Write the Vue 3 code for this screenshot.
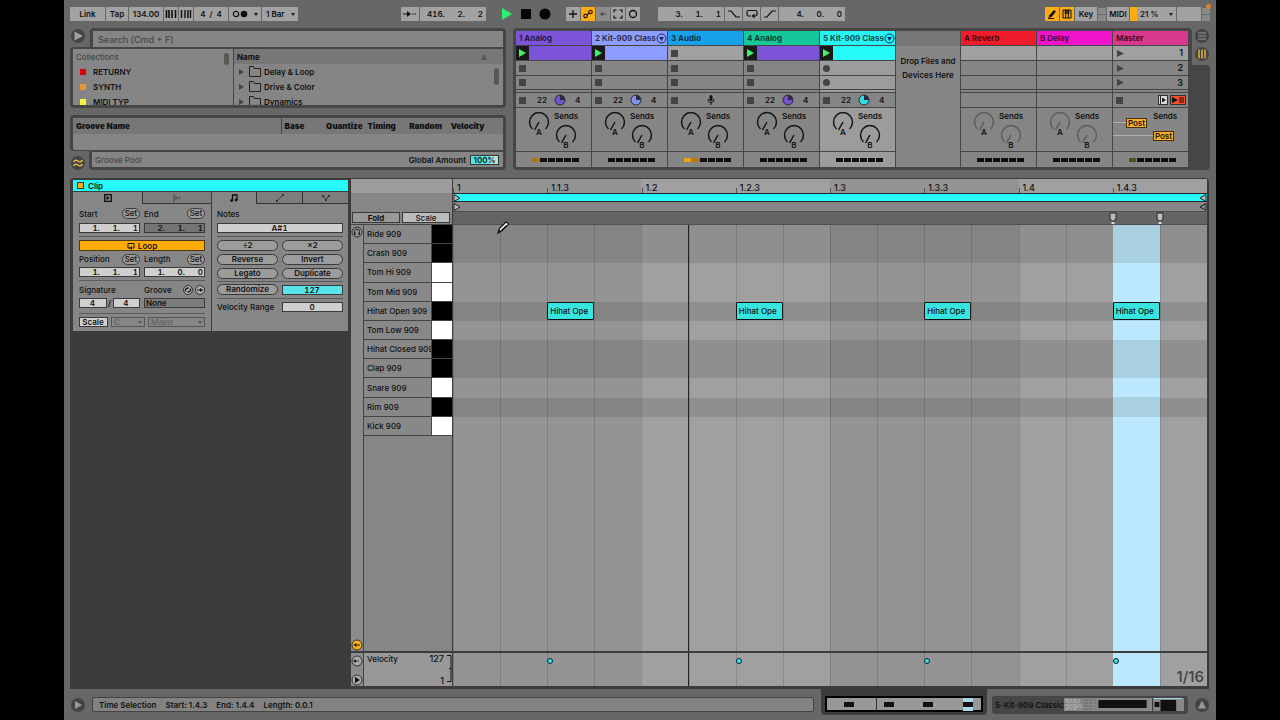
<script setup>
const tracks = [
  { name: '1 Analog', color: '#7c54d8', clip: '#7c54d8', pie: '#7254c8', meter: ['#a8781c'] },
  { name: '2 Kit-909 Class', color: '#8c9cff', clip: '#8c9cff', pie: '#8294ee', fold: true, meter: [] },
  { name: '3 Audio', color: '#18a0e8', audio: true, meter: ['#e8a414', '#b47c14'] },
  { name: '4 Analog', color: '#14c89c', clip: '#7c54d8', pie: '#7254c8', meter: [] },
  { name: '5 Kit-909 Class', color: '#26f4f4', clip: '#26fbfb', pie: '#30dce0', fold: true, selected: true, meter: [] }
]
const returns = [
  { name: 'A Reverb', color: '#f01c2c' },
  { name: 'B Delay', color: '#ee14cc' }
]
const collections = [
  { name: 'RETURNY', color: '#d8000c' },
  { name: 'SYNTH', color: '#e89434' },
  { name: 'MIDI TYP', color: '#f4f43c' }
]
const folders = ['Delay & Loop', 'Drive & Color', 'Dynamics']
const pads = [
  ['Ride 909', 1], ['Crash 909', 1], ['Tom Hi 909', 0], ['Tom Mid 909', 0], ['Hihat Open 909', 1], ['Tom Low 909', 0],
  ['Hihat Closed 909', 1], ['Clap 909', 1], ['Snare 909', 0], ['Rim 909', 1], ['Kick 909', 0]
]
const times = ['1', '1.1.3', '1.2', '1.2.3', '1.3', '1.3.3', '1.4', '1.4.3']
const notes = [12.5, 37.5, 62.5, 87.5]
const gap = '      '
const pos = (a, b, c) => a + '.' + gap + b + '.' + gap + c
</script>

<template>
  <main class="screen">
    <div class="window">
      <i class="indicator"></i>
      <header class="toolbar">
        <div class="group">
          <button class="tb w35">Link</button>
          <button class="tb w22">Tap</button>
          <input class="tb w34" value="134.00" aria-label="Tempo">
          <button class="tb w14" aria-label="Nudge down"><svg width="12" height="10"><path d="M1.500 1v8M4 1v8M7 1v8M10.500 1v8" stroke="#111" stroke-width="1.600" /></svg></button>
          <button class="tb w14" aria-label="Nudge up"><svg width="12" height="10"><path d="M1.500 1v8M5 1v8M8 1v8M10.500 1v8" stroke="#111" stroke-width="1.400" /></svg></button>
          <input class="tb w34" value="4  /  4" aria-label="Time signature">
          <button class="tb w32 metro" aria-label="Metronome"><svg width="26" height="10"><circle cx="4" cy="5" r="2.700" fill="none" stroke="#111" stroke-width="1.200" /><circle cx="12" cy="5" r="3.300" fill="#111" /><path d="M22 4h4l-2 3z" fill="#111" /></svg></button>
          <span class="pick w36"><select class="tb" aria-label="Quantization"><option>1 Bar</option></select></span>
        </div>
        <div class="group place">
          <button class="tb w18" aria-label="Follow"><svg width="14" height="8"><path d="M0 4h5M9 4h1.500M11.500 4h1.500" stroke="#111" stroke-width="1.200" /><path d="M4 1l4 3-4 3z" fill="#111" /></svg></button>
          <input class="tb right w66" :value="pos(416, 2, 2)" aria-label="Arrangement position">
        </div>
        <div class="group transport">
          <button aria-label="Play"><svg width="12" height="12"><path d="M1 0l10 6-10 6z" fill="#2ef070" /></svg></button>
          <button aria-label="Stop"><svg width="12" height="12"><path d="M1 1h10v10H1z" fill="#050505" /></svg></button>
          <button aria-label="Record"><svg width="12" height="12"><circle cx="6" cy="6" r="5.500" fill="#050505" /></svg></button>
        </div>
        <div class="group tools">
          <button class="tb w14" aria-label="Overdub"><svg width="10" height="10"><path d="M5 1v8M1 5h8" stroke="#111" stroke-width="1.300" /></svg></button>
          <button class="tb w14 on" aria-label="Automation arm"><svg width="10" height="10" fill="none" stroke="#111" stroke-width="1.100"><circle cx="2.500" cy="7" r="1.700" /><circle cx="7.500" cy="3" r="1.700" /><path d="M4 6l2-2" /></svg></button>
          <button class="tb w14 dimmed" aria-label="Re-enable automation"><svg width="10" height="10"><path d="M4 5h4" stroke="#555" stroke-width="1.500" /><path d="M5 2.500L1.500 5 5 7.500z" fill="#555" /></svg></button>
          <button class="tb w14" aria-label="Capture"><svg width="10" height="10"><path d="M1 3.500V1h2.500M6.500 1H9v2.500M9 6.500V9H6.500M3.500 9H1V6.500" fill="none" stroke="#111" stroke-width="1.200" /></svg></button>
          <button class="tb w14" aria-label="Session record"><svg width="10" height="10"><circle cx="5" cy="5" r="3.500" fill="none" stroke="#111" stroke-width="1.300" /></svg></button>
        </div>
        <div class="group loopset">
          <input class="tb right w66" :value="pos(3, 1, 1)" aria-label="Loop start">
          <button class="tb w17" aria-label="Punch in"><svg width="12" height="8"><path d="M0 1h3l5 6h4" fill="none" stroke="#111" stroke-width="1.200" /></svg></button>
          <button class="tb w17" aria-label="Loop"><svg width="12" height="10"><path d="M5 7H2.500Q1 7 1 5.500V3q0-1.500 1.500-1.500h7Q11 1.500 11 3v2.500Q11 7 9.500 7H8" fill="none" stroke="#111" stroke-width="1.200" /><path d="M8.500 4.500v5L5.500 7z" fill="#111" /></svg></button>
          <button class="tb w17" aria-label="Punch out"><svg width="12" height="8"><path d="M0 7h3l5-6h4" fill="none" stroke="#111" stroke-width="1.200" /></svg></button>
          <input class="tb right w66" :value="pos(4, 0, 0)" aria-label="Loop length">
        </div>
        <div class="group end">
          <button class="tb w14 on" aria-label="Draw mode"><svg width="10" height="10"><path d="M2 6.500L7 1l2 1.500L4.500 8 1.500 9z" fill="#111" /><path d="M1 9.500h6" stroke="#111" /></svg></button>
          <button class="tb w14 on" aria-label="Computer MIDI keyboard"><svg width="10" height="10"><path d="M1 1h8v8H1zM3.700 1v8M6.300 1v8" fill="none" stroke="#111" /><path d="M2.700 1h2v4h-2zM5.300 1h2v4h-2z" fill="#111" /></svg></button>
          <button class="tb w22">Key</button>
          <span class="leds"><i></i><i></i></span>
          <button class="tb w22">MIDI</button>
          <button class="tb cpu">21 %<i></i></button>
          <span class="tb w24"></span>
          <span class="leds"><i></i><i></i></span>
        </div>
      </header>

      <div class="upper">
        <section class="left">
          <div class="browser">
            <div class="tabrow">
              <button class="round" aria-label="Toggle browser"><svg width="14" height="14"><circle cx="7" cy="7" r="7" fill="#444" /><path d="M3.500 2.500L12 7l-8.500 4.500z" fill="#a0a0a0" /></svg></button>
              <div class="tab"><input class="search" type="text" placeholder="Search (Cmd + F)" aria-label="Search"></div>
            </div>
            <div class="frame files">
              <div class="collections">
                <p class="faint">Collections</p>
                <p v-for="c in collections" :key="c.name"><i class="swatch" :style="{ background: c.color }"></i>{{ c.name }}</p>
                <i class="thumb"></i>
              </div>
              <div class="folders">
                <h2>Name<svg width="6" height="6"><path d="M3 0l3 6H0z" fill="#555" /></svg></h2>
                <p v-for="f in folders" :key="f"><svg width="5" height="6"><path d="M0 0l5 3-5 3z" fill="#444" /></svg><svg width="12" height="11"><path d="M.5 10.500V.5h4l1 2h6v8z" fill="none" stroke="#222" /></svg>{{ f }}</p>
                <i class="thumb"></i>
              </div>
            </div>
          </div>
          <div class="grooves">
            <div class="frame gtable">
              <div class="ghead"><b>Groove Name</b><b>Base</b><b>Quantize</b><b>Timing</b><b>Random</b><b>Velocity</b></div>
            </div>
            <div class="tabrow">
              <button class="round low" aria-label="Groove pool"><svg width="14" height="14"><circle cx="7" cy="7" r="7" fill="#444" /><path d="M2.500 6q2-3 4.500-1t4.500-1M2.500 10q2-3 4.500-1t4.500-1" fill="none" stroke="#e4b43c" stroke-width="1.500" /></svg></button>
              <div class="tab pool"><span class="faint">Groove Pool</span><label>Global Amount <input value="100%"></label></div>
            </div>
          </div>
        </section>

        <section class="session">
          <div v-for="t in tracks" :key="t.name" class="track" :class="{ selected: t.selected }">
            <h3 :style="{ background: t.color }">{{ t.name }}<svg v-if="t.fold" width="11" height="11"><circle cx="5.500" cy="5.500" r="4.500" fill="none" stroke="#1c2a60" /><path d="M3 4h5L5.500 8z" fill="#1c2a60" /></svg></h3>
            <div v-if="t.clip" class="slot clip" :style="{ background: t.clip }"><button aria-label="Launch clip"><svg width="7" height="8"><path d="M0 0l7 4-7 4z" fill="#3ff46c" /></svg></button></div>
            <div v-else class="slot lit"><i class="stop"></i></div>
            <div class="slot"><i class="stop" :class="{ dot: t.selected }"></i></div>
            <div class="slot"><i class="stop" :class="{ dot: t.selected }"></i></div>
            <div class="slot"></div>
            <div class="slot status">
              <i class="stop"></i>
              <template v-if="t.clip"><span>22</span><svg width="12" height="12"><circle cx="6" cy="6" r="5" :fill="t.pie" stroke="#2a2a44" /><path d="M6 6V1a5 5 0 0 1 5 5z" fill="#2a2a44" /></svg><span>4</span></template>
              <svg v-else class="mic" width="8" height="10"><rect x="2.500" y="0" width="3" height="6" rx="1.500" fill="#111" /><path d="M1 4q0 3.500 3 3.500T7 4M4 7v3" fill="none" stroke="#111" /></svg>
            </div>
            <div class="slot sends">
              <svg class="knob" width="22" height="26"><path d="M4.500 19A9.500 9.500 0 1 1 17.500 19M11 12L6.500 20" /><text x="11" y="25">A</text></svg>
              <div><span>Sends</span><svg class="knob" width="22" height="26"><path d="M4.500 19A9.500 9.500 0 1 1 17.500 19M11 12L6.500 20" /><text x="11" y="25">B</text></svg></div>
            </div>
            <div class="slot meter"><i v-for="n in 6" :key="n" :style="{ background: t.meter[n - 1] }"></i></div>
          </div>
          <div class="drop"><p>Drop Files and<br>Devices Here</p></div>
          <div v-for="t in returns" :key="t.name" class="track return">
            <h3 :style="{ background: t.color }">{{ t.name }}</h3>
            <div class="slot lit"></div><div class="slot"></div><div class="slot"></div><div class="slot"></div><div class="slot"></div>
            <div class="slot sends">
              <svg class="knob" width="22" height="26"><path d="M4.500 19A9.500 9.500 0 1 1 17.500 19M11 12L6.500 20" /><text x="11" y="25">A</text></svg>
              <div><span>Sends</span><svg class="knob" width="22" height="26"><path d="M4.500 19A9.500 9.500 0 1 1 17.500 19M11 12L6.500 20" /><text x="11" y="25">B</text></svg></div>
            </div>
            <div class="slot meter"><i v-for="n in 6" :key="n"></i></div>
          </div>
          <div class="track master">
            <h3>Master</h3>
            <div v-for="n in 3" :key="n" class="slot scene" :class="{ lit: n === 1 }"><svg width="7" height="7"><path d="M0 0l7 3.500L0 7z" fill="#444" /></svg><span>{{ n }}</span></div>
            <div class="slot"></div>
            <div class="slot status"><i class="stop"></i>
              <button class="mini" aria-label="Stop all"><svg width="8" height="8"><path d="M1.500 0v8M3.500 2v4" stroke="#222" /><path d="M4 2l3 2-3 2z" fill="#222" /></svg></button>
              <button class="mini hot" aria-label="Back to arrangement"><svg width="12" height="8"><path d="M0 1l6 3-6 3z" fill="#111" /><path d="M7 2h5M7 4h5M7 6h5" stroke="#111" /></svg></button>
            </div>
            <div class="slot posts"><div><i></i><button>Post</button><span>Sends</span></div><div><i class="long"></i><button>Post</button></div></div>
            <div class="slot meter"><i v-for="n in 6" :key="n" :class="{ warm: n === 1 }"></i></div>
          </div>
        </section>
        <nav class="views">
          <button aria-label="Arrangement view"><svg width="14" height="14"><circle cx="7" cy="7" r="7" fill="#444" /><path d="M3 4h8M3 7h8M3 10h8" stroke="#999" stroke-width="1.200" /></svg></button>
          <button aria-label="Session view"><svg width="14" height="14"><circle cx="7" cy="7" r="7" fill="#444" /><path d="M4 2.500v9M7 2.500v9M10 2.500v9" stroke="#d8a83c" stroke-width="1.600" /></svg></button>
          <div></div>
        </nav>
      </div>

      <div class="detail">
        <section class="clipview">
          <h2><i></i>Clip</h2>
          <div class="cols">
            <div class="pane">
              <div class="tabs two">
                <button class="active" aria-label="Clip"><svg width="8" height="8"><path d="M.7.7h6.600v6.600H.7z" fill="none" stroke="#111" stroke-width="1.300" /><path d="M2.500 2l3.500 2-3.500 2z" fill="#111" /></svg></button>
                <button aria-label="Launch"><svg width="8" height="8"><path d="M1 0v8M3 2v4M5 3v2M7 3v2" stroke="#444" /></svg></button>
              </div>
              <div class="rows a">
                <div class="pair"><div class="lab">Start<button class="pill set">Set</button></div><div class="lab">End<button class="pill set">Set</button></div></div>
                <div class="pair"><input class="num" :value="pos(1, 1, 1)" aria-label="Start"><input class="num off" :value="pos(2, 1, 1)" aria-label="End"></div>
                <hr>
                <button class="loop"><svg width="8" height="8"><path d="M3 6H1V1.500h6V6H5.500" fill="none" stroke="#111" /><path d="M2.500 6L5 4v4z" fill="#111" /></svg>Loop</button>
                <div class="pair"><div class="lab">Position<button class="pill set">Set</button></div><div class="lab">Length<button class="pill set">Set</button></div></div>
                <div class="pair"><input class="num" :value="pos(1, 1, 1)" aria-label="Position"><input class="num" :value="pos(1, 0, 0)" aria-label="Length"></div>
                <hr>
                <div class="pair"><div class="lab">Signature</div><div class="lab">Groove<span class="duo"><button class="dotbtn" aria-label="Hot-swap groove"><svg width="8" height="8"><path d="M1.500 5.500Q1 2 4.500 2M6.500 2.500Q7 6 3.500 6" fill="none" stroke="#111" stroke-width="1.300" /></svg></button><button class="dotbtn" aria-label="Commit groove"><svg width="8" height="8"><path d="M1 4h3" stroke="#111" /><path d="M4 2l3 2-3 2z" fill="#111" /></svg></button></span></div></div>
                <div class="pair"><div class="sig"><input class="num" value="4" aria-label="Numerator">/<input class="num" value="4" aria-label="Denominator"></div><select class="num groove" aria-label="Groove"><option>None</option></select></div>
                <hr>
                <div class="scale"><button class="num">Scale</button><span class="pick"><select aria-label="Root" disabled><option>C</option></select></span><span class="pick"><select aria-label="Scale name" disabled><option>Major</option></select></span></div>
              </div>
            </div>
            <div class="pane">
              <div class="tabs three">
                <button class="active" aria-label="Notes"><svg width="8" height="8"><path d="M2.500 6.500V1H7v5" fill="none" stroke="#111" stroke-width="1.300" /><circle cx="1.700" cy="6.500" r="1.400" fill="#111" /><circle cx="6" cy="6" r="1.400" fill="#111" /></svg></button>
                <button aria-label="Envelopes"><svg width="8" height="8"><path d="M1 7l6-6" stroke="#333" /><path d="M0 6h2v2H0zM6 0h2v2H6z" fill="#333" /></svg></button>
                <button aria-label="Expression"><svg width="8" height="8"><path d="M1 1.500L4 6l3-4.500" fill="none" stroke="#333" /><path d="M0 1h2v2H0zM6 1h2v2H6zM3 5h2v2H3z" fill="#333" /></svg></button>
              </div>
              <div class="rows b">
                <div class="lab">Notes</div>
                <input class="num center" value="A#1" aria-label="Notes">
                <hr>
                <div class="buttons"><button class="pill">÷2</button><button class="pill">×2</button><button class="pill">Reverse</button><button class="pill">Invert</button><button class="pill">Legato</button><button class="pill">Duplicate</button></div>
                <hr>
                <div class="pair"><button class="pill">Randomize</button><input class="num center cyan" value="127" aria-label="Randomize amount"></div>
                <hr>
                <div class="pair"><label for="vr">Velocity Range</label><input id="vr" class="num center range" value="0"></div>
              </div>
            </div>
          </div>
        </section>

        <section class="editor">
          <div class="corner">
            <div class="pale"></div>
            <div class="fold"><button>Fold</button><button class="soft">Scale</button></div>
          </div>
          <div class="ruler">
            <div class="times shade"><span v-for="t in times" :key="t">{{ t }}</span></div>
            <div class="loopbar"><svg width="8" height="8"><path d="M1 .5L7 4 1 7.500z" fill="#bbb" stroke="#222" /></svg><svg width="8" height="8"><path d="M7 .5L1 4l6 3.500z" fill="#bbb" stroke="#222" /></svg></div>
            <div class="brace"><svg width="8" height="8"><path d="M1 .5L7 4 1 7.500z" fill="#bbb" stroke="#222" /></svg><svg width="8" height="8"><path d="M7 .5L1 4l6 3.500z" fill="none" stroke="#222" /></svg></div>
            <div class="scrub">
              <svg v-for="x in [87.5, 93.75]" :key="x" width="8" height="12" :style="{ left: x + '%' }"><path d="M1 1h6v6L4 9.500 1 7z" fill="#bbb" stroke="#222" /><path d="M2.500 10h3v2h-3z" fill="#ddd" /></svg>
            </div>
          </div>

          <div class="keys">
            <div class="strip"><svg width="12" height="12"><circle cx="6" cy="6" r="5" fill="#909090" stroke="#333" /><path d="M3.500 8V5.500a2.500 2.500 0 0 1 5 0V8" fill="none" stroke="#222" /><path d="M3 6.500h1.500v2.500H3zM7.500 6.500H9v2.500H7.500z" fill="#222" /></svg>
              <svg width="12" height="12"><circle cx="6" cy="6" r="5" fill="#f4b020" stroke="#443010" /><path d="M3 6h6" stroke="#222" /><path d="M5.500 4v4L2.500 6z" fill="#222" /></svg></div>
            <div class="pads"><div v-for="p in pads" :key="p[0]"><span>{{ p[0] }}</span><i :class="{ black: p[1] }"></i></div></div>
          </div>
          <div class="grid shade">
            <div class="lanes"><i v-for="p in pads" :key="p[0]" :class="{ dark: p[1] }"></i></div>
            <div class="lines"></div>
            <i class="select"></i>
            <div class="lanes over"><i v-for="p in pads" :key="p[0]"><template v-if="p[0] === 'Hihat Open 909'"><b v-for="n in notes" :key="n" :style="{ left: n + '%' }">Hihat Ope</b></template></i></div>
            <i class="playhead"></i>
            <svg class="pencil" width="14" height="14"><path d="M2 12l1.500-4.500 6-6q1-.7 2 .3t.3 2l-6 6z" fill="#fff" stroke="#111" stroke-width="1.200" /><path d="M2 12l1.200-3.500 2.500 2.200z" fill="#111" /><path d="M5.500 9.500l5-5" stroke="#111" stroke-width="1.300" /></svg>
          </div>

          <div class="keys vel">
            <div class="strip"><svg width="12" height="12"><circle cx="6" cy="6" r="5" fill="#aaa" stroke="#333" /><path d="M4 6h5" stroke="#222" stroke-dasharray="1.500 1" /><circle cx="4" cy="6" r="1.500" fill="#222" /></svg>
              <svg width="12" height="12"><circle cx="6" cy="6" r="5" fill="#aaa" stroke="#333" /><path d="M4 3l5 3-5 3z" fill="#111" /></svg></div>
            <div class="velbox"><span>Velocity</span><div><span>127</span><span>1</span></div><svg width="5" height="29"><path d="M0 1.500h4v26H0M2 14.500h2" fill="none" stroke="#111" /></svg></div>
          </div>
          <div class="velgrid shade">
            <div class="lines"></div>
            <i class="select"></i>
            <b v-for="n in notes" :key="n" :style="{ left: n + '%' }"></b>
            <i class="playhead"></i>
            <span class="res">1/16</span>
          </div>
        </section>
      </div>

      <footer class="statusbar">
        <button class="round" aria-label="Info view"><svg width="14" height="14"><circle cx="7" cy="7" r="7" fill="#444" /><path d="M4 3l7 4-7 4z" fill="#999" /></svg></button>
        <div class="info"><span>Time Selection</span><span>Start: 1.4.3</span><span>End: 1.4.4</span><span>Length: 0.0.1</span></div>
        <div class="notch"><div class="overview"><i></i><i></i><i></i><i class="hl"></i></div></div>
        <div class="chain"><span>5-Kit-909 Classic</span><svg viewBox="0 0 124 13" width="122" height="13"><path d="M0 0h122v13H0z" fill="#888" /><path d="M1 2h16M2 4h14M1 7h17M3 9h15M1 11h12" stroke="#bbb" stroke-dasharray="4 1 2 1" /><path d="M20 2h12M20 5h13M20 8h12M20 11h12" stroke="#666" stroke-dasharray="5 1 3 2" /><path d="M35 2h49v8H35z" fill="#111" /><path d="M90 0v13" stroke="#333" /><path d="M91 .5h29" stroke="#a0dcf4" /><path d="M92 4h5v5h-5zM98 2h16v11H98z" fill="#111" /></svg></div>
        <button class="round" aria-label="Toggle detail"><svg width="14" height="14"><circle cx="7" cy="7" r="7" fill="#444" /><path d="M7 2.500l4 8H3z" fill="#999" /></svg></button>
      </footer>
    </div>
  </main>
</template>

<style>
body { margin: 0; background: #000; }
</style>

<style scoped>
* { box-sizing: border-box; }
.screen { padding: 0 5%; background: #000; min-height: 100vh; display: grid; font: 600 8px/10px Inter, "Liberation Sans", sans-serif; color: #111; }
.window { background: #676767; display: flex; flex-direction: column; min-width: 0; position: relative; }
.indicator { position: absolute; right: 5px; top: 4px; width: 5px; height: 5px; border-radius: 50%; background: #d88030; }
button, input, select { font: inherit; color: inherit; border: 0; border-radius: 0; background: none; padding: 0; margin: 0; min-width: 0; appearance: none; text-align: center; outline: 0; opacity: 1; }
svg { display: block; flex: none; }
h2, h3, p { margin: 0; font: inherit; }
i { font-style: normal; display: block; }
button { display: flex; align-items: center; justify-content: center; }

.toolbar { height: 28px; padding: 0 6px; display: flex; align-items: center; white-space: nowrap; }
.group { display: flex; gap: 1px; align-items: center; }
.tb { height: 14px; background: #a2a2a2; flex: none; display: flex; align-items: center; }
input.tb, select.tb { display: block; }
.right, .num { font-variant-numeric: tabular-nums; }
.right { text-align: right; padding-right: 3px; }
.tb.on { background: #fcac14; }
.tb.dimmed { background: #8c8c8c; }
.w14 { width: 14px; }
.w17 { width: 17px; }
.w18 { width: 18px; }
.w22 { width: 22px; }
.w24 { width: 24px; }
.w32 { width: 32px; }
.w34 { width: 34px; }
.w35 { width: 35px; }
.w36 { width: 36px; }
.w66 { width: 66px; }
.pick { display: grid; align-items: center; }
.pick > select { grid-area: 1 / 1; width: 100%; padding-left: 4px; text-align: left; }
.pick::after { content: ""; grid-area: 1 / 1; justify-self: end; margin-right: 3px; border: 2px solid transparent; border-top: 3px solid #222; border-bottom: 0; pointer-events: none; }
.place { margin-left: 103px; }
.transport { margin-left: 15px; gap: 7px; }
.tools { margin-left: 15px; }
.loopset { margin-left: 18px; }
.end { margin-left: auto; }
.leds { width: 8px; display: grid; gap: 1px; }
.leds i { height: 6px; background: #8a8a8a; }
.cpu { width: 46px; border-left: 7px solid #fcac14; justify-content: space-between; padding: 0 3px; }
.cpu i { border: 2px solid transparent; border-top: 3px solid #222; border-bottom: 0; }

.upper { display: grid; grid-template-columns: 443fr 679fr 18px; padding: 0 6px; height: 142px; }
.left { display: flex; flex-direction: column; gap: 7px; min-width: 0; margin-right: 7px; }
.tabrow { display: flex; }
.round { width: 14px; height: 14px; margin: 1px 5px 0 1px; flex: none; }
.tab { flex: 1; background: #464646; border-radius: 4px 4px 0 0; padding: 3px 3px 0; height: 19px; }
.search { width: 100%; height: 16px; background: #858585; text-align: left; padding-left: 5px; font-size: 9px; display: block; font-weight: 500; }
.search::placeholder { color: #474747; opacity: 1; }
.frame { background: #464646; padding: 2px 3px 3px; border-radius: 4px 0 4px 4px; display: grid; }
.files { grid-template-columns: 160fr 269fr; gap: 1px; height: 61px; }
.files > div { background: #858585; overflow: hidden; position: relative; }
.files p { height: 15px; display: flex; align-items: center; padding-left: 7px; }
.files p.faint { padding-left: 3px; height: 15px; }
.faint { color: #474747; font-weight: 500; }
.swatch { width: 6px; height: 6px; margin-right: 7px; }
.folders h2 { height: 15px; background: #777; padding: 0 16px 0 3px; display: flex; align-items: center; justify-content: space-between; font-weight: 700; }
.folders p { gap: 3px; padding-left: 5px; }
.folders p svg + svg { margin: 0 0 0 2px; }
.thumb { position: absolute; right: 4px; top: 4px; width: 5px; height: 12px; border-radius: 3px; background: #585858; }
.folders .thumb { top: 19px; height: 17px; }
.gtable { height: 36px; border-radius: 4px 4px 0 4px; padding-top: 3px; align-content: start; background: linear-gradient(#858585, #858585) content-box, #464646; padding-bottom: 1px; }
.ghead { display: grid; grid-template-columns: 208fr 42fr 42fr 42fr 42fr 42fr 14fr; height: 16px; align-items: center; background: #777; font-weight: 700; padding-left: 3px; }
.ghead b { white-space: nowrap; padding-left: 3px; }
.ghead b:first-child { padding-left: 0; border-right: 1px solid #464646; line-height: 16px; }
.low { margin-top: 5px; margin-right: 4px; }
.pool { background: linear-gradient(#858585, #858585) content-box, #464646; padding: 1px 3px 3px; border-radius: 0 0 4px 4px; display: flex; justify-content: space-between; align-items: center; height: 19px; }
.pool .faint { padding-left: 3px; font-size: 8px; }
.pool label { display: flex; align-items: center; gap: 4px; padding-right: 4px; }
.pool input { width: 29px; height: 10px; border: 1px solid #333; background: linear-gradient(90deg, #58e8e4 70%, #b4e0e0 70%); }

.session { background: #464646; border-radius: 4px 4px 0 4px; padding: 3px 4px 3px 3px; height: 142px; display: grid; grid-template-columns: repeat(5, 75fr) 64fr repeat(3, 75fr); column-gap: 1px; min-width: 0; }
.track { display: grid; grid-template-rows: 14px 14px 14px 13px 2px 14px 43px 15px; row-gap: 1px; min-width: 0; }
.track h3 { padding: 0 2px 0 3px; display: flex; align-items: center; justify-content: space-between; font-weight: 700; color: rgb(0 0 0 / 72%); white-space: nowrap; overflow: hidden; }
.slot { background: #858585; display: flex; align-items: center; padding-left: 3px; min-width: 0; }
.lit { background: #a0a0a0; }
.selected .slot { background: #9c9c9c; }
.selected .status { background: #858585; }
.slot.clip { padding: 0; }
.clip button { width: 13px; height: 14px; background: #181818; }
.stop { width: 7px; height: 7px; background: #444; flex: none; }
.dot { border-radius: 50%; }
.status span:nth-of-type(1) { margin: 0 7px 0 11px; }
.status span:nth-of-type(2) { margin-left: 9px; }
.mic { margin-left: 29px; }
.slot.sends { align-items: flex-start; gap: 3px; padding: 2px 0 0 12px; }
.sends div { text-align: center; }
.sends div span { display: block; line-height: 13px; margin-left: 1px; }
.sends div svg { margin-left: 2px; }
.knob path { fill: none; stroke: #141414; stroke-width: 1.5; }
.knob text { font-size: 8px; text-anchor: middle; fill: #111; }
.return .knob path { stroke: #5c5c5c; }
.meter { justify-content: center; gap: 1px; }
.meter i { width: 7px; height: 4px; background: #101010; }
.meter i.warm { background: #505020; }
.drop { background: linear-gradient(#777 15px, #858585 15px); text-align: center; line-height: 14px; padding-top: 23px; white-space: nowrap; font-weight: 600; }
.master h3 { background: #d8388e; }
.slot.scene { justify-content: space-between; padding: 0 5px 0 4px; }
.scene span { font-size: 9px; }
.mini { width: 10px; height: 10px; background: #d8d8d8; border: 1px solid #333; margin-left: auto; }
.mini.hot { width: 16px; background: #f4502c; margin: 0 2px; }
.slot.posts { flex-direction: column; align-items: stretch; padding: 2px 0 0; }
.posts div { display: flex; align-items: flex-end; height: 18px; }
.posts div + div { height: 13px; }
.posts i { width: 13px; height: 1px; background: #b0b0b0; margin-bottom: 5px; }
.posts i.long { width: 40px; }
.posts button { background: #fcb024; border: 1px solid #443010; height: 10px; width: 21px; }
.posts span { margin-left: 6px; align-self: flex-start; line-height: 13px; }
.views { display: flex; flex-direction: column; gap: 4px; }
.views button { height: 14px; justify-content: flex-start; padding-left: 3px; }
.views button:first-child { margin-top: 1px; }
.views div { background: #464646; flex: 1; border-radius: 0 4px 4px 0; }

.detail { margin: 8px 7px 0 6px; background: #3c3c3c; border-radius: 4px 4px 0 0; padding: 1px 2px 3px; flex: 1; display: grid; grid-template-columns: 276px 1fr; gap: 3px; min-height: 511px; }
.clipview { padding: 1px 0 1px 1px; }
.clipview h2 { height: 11px; background: #26fbfb; display: flex; align-items: center; gap: 4px; padding-left: 4px; }
.clipview h2 i { width: 7px; height: 7px; background: #fcac14; border: 1px solid #333; }
.cols { display: grid; grid-template-columns: 138fr 136fr; gap: 1px; margin-top: 1px; }
.pane { background: #868686; }
.tabs { display: grid; height: 12px; }
.two { grid-template-columns: 1fr 1fr; }
.three { grid-template-columns: 44fr 46fr 46fr; }
.tabs button { border-bottom: 1px solid #333; border-left: 1px solid #333; background: #7e7e7e; }
.tabs .active { border: 0; background: none; }
.rows { display: grid; padding: 0 6px 4px; align-items: center; }
.a { grid-template-rows: 19px 10px 7px 11px 16px 10px 6px 14px 12px 8px 10px; }
.b { grid-template-rows: 19px 10px 7px 39px 5px 11px 7px 10px; padding: 0 5px 17px; }
.pair { display: grid; grid-template-columns: 1fr 1fr; gap: 4px; align-items: center; height: 100%; }
.lab { display: flex; justify-content: space-between; align-items: center; font-weight: 500; }
.pair label { white-space: nowrap; font-weight: 500; }
.num { border: 1px solid #3a3a3a; background: #cfcfcf; height: 10px; line-height: 8px; width: 100%; text-align: right; padding-right: 1px; display: block; }
.num.off { background: #757575; }
.num.center { text-align: center; }
.num.cyan { background: #58e4ec; }
hr { border: 0; border-top: 1px solid #5c5c5c; margin: 0; width: 100%; }
.pill { height: 11px; border: 1px solid #3a3a3a; border-radius: 6px; background: #9c9c9c; line-height: 9px; }
.set { width: 18px; }
.loop { height: 11px; background: #fcac04; border: 1px solid #4c3810; gap: 3px; }
.duo { display: flex; gap: 2px; }
.dotbtn { width: 10px; height: 10px; border-radius: 50%; border: 1px solid #333; background: #aaa; }
.sig { display: grid; grid-template-columns: 1fr 6px 1fr; text-align: center; }
.sig .num { text-align: center; }
.num.groove { background: #7c7c7c; text-align: left; padding-left: 1px; }
.scale { display: grid; grid-template-columns: 29px 34px 1fr; gap: 3px; }
.scale .num { text-align: center; }
.scale select { height: 10px; line-height: 8px; border: 1px solid #555; color: #666; padding-left: 2px; }
.scale .pick::after { border-top-color: #555; }
.buttons { display: grid; grid-template-columns: 1fr 1fr; gap: 3px 4px; }

.editor { display: grid; grid-template-columns: 102px 1fr; grid-template-rows: 46px 1fr 35px; min-width: 0; background: #868686; }
.shade { background: repeating-linear-gradient(90deg, #949494 0 25%, #a0a0a0 25% 50%); }
.corner { border-right: 1px solid #3c3c3c; border-bottom: 1px solid #444; display: flex; flex-direction: column; justify-content: space-between; }
.pale { height: 14px; background: #9c9c9c; }
.fold { display: flex; gap: 2px; padding: 0 2px 1px 1px; }
.fold button { flex: 1; height: 11px; border: 1px solid #3a3a3a; background: #989898; font-weight: 700; }
.fold .soft { background: #bcbcbc; font-weight: 500; }
.ruler { min-width: 0; display: grid; grid-template-rows: 14px 9px 9px 14px; }
.times { display: grid; grid-template-columns: repeat(8, 1fr); }
.times span { padding-left: 4px; line-height: 10px; height: 10px; margin-top: 4px; font-size: 9px; font-weight: 500; background: linear-gradient(#555, #555) 0 100% / 1px 5px no-repeat; }
.loopbar, .brace { display: flex; justify-content: space-between; align-items: center; }
.loopbar { background: #26fbfb; border: 1px solid #222; border-width: 1px 0; }
.scrub { background: #646464; border: 1px solid #505050; border-width: 1px 0; position: relative; }
.scrub svg { position: absolute; top: 0; margin-left: -4px; }
.keys { display: grid; grid-template-columns: 13px 1fr; border-right: 1px solid #3c3c3c; }
.strip { border-right: 1px solid #444; background: #8c8c8c; display: flex; flex-direction: column; justify-content: space-between; padding: 1px 0 0; }
.pads { display: grid; grid-auto-rows: 1fr; height: 211px; }
.pads div { display: grid; grid-template-columns: 1fr 21px; border-bottom: 1px solid #444; background: #888; align-items: stretch; }
.pads span { padding-left: 3px; white-space: nowrap; align-self: center; width: 0; font-weight: 500; }
.pads i { background: #fff; border-left: 1px solid #444; }
.pads .black { background: #000; }
.grid, .velgrid { position: relative; min-width: 0; }
.lanes { position: absolute; inset: 0 0 auto; height: 211px; display: grid; grid-auto-rows: 1fr; }
.lanes .dark { background: rgb(0 0 0 / 10%); }
.over i { position: relative; }
.over b { position: absolute; top: 0; bottom: 1px; width: 6.25%; background: #38e4e0; border: 1px solid #111; border-radius: 1px; display: flex; align-items: center; padding-left: 2px; font-weight: 500; white-space: nowrap; overflow: hidden; }
.lines { position: absolute; inset: 0; background: repeating-linear-gradient(90deg, rgb(0 0 0 / 14%) 0 1px, transparent 1px 6.25%); }
.select { position: absolute; top: 0; bottom: 0; left: 87.5%; width: 6.25%; background: #bce8ff; }
.grid .select { background: linear-gradient(#a8d0e0 38px, #bce8ff 38px 77px, #a8d0e0 77px 96px, #bce8ff 96px 115px, #a8d0e0 115px 153px, #bce8ff 153px 172px, #a8d0e0 172px 192px, #bce8ff 192px); }
.playhead { position: absolute; top: 0; bottom: 0; left: 31.2%; width: 1px; background: #222; }
.pencil { position: absolute; left: 6%; top: -4px; margin-left: -2px; }
.vel, .velgrid { border-top: 2px solid #3c3c3c; }
.vel .strip { padding-top: 2px; }
.velbox { background: #989898; display: grid; grid-template-columns: 1fr auto 5px; column-gap: 3px; padding: 1px 0 0 3px; font-weight: 500; }
.velbox div { display: flex; flex-direction: column; justify-content: space-between; text-align: right; font-size: 9px; }
.velgrid b { position: absolute; top: 5px; width: 6px; height: 6px; border: 1px solid #123; border-radius: 50%; background: #38e4e0; }
.res { position: absolute; right: 3px; bottom: 1px; font: 500 15px/16px Inter, "Liberation Sans", sans-serif; color: #404040; }

.statusbar { height: 31px; display: flex; align-items: center; padding: 0 7px 0 6px; }
.statusbar .round { margin: 0 7px 0 1px; }
.info { flex: 1; height: 15px; border: 1px solid #444; border-radius: 2px; background: #828282; display: flex; align-items: center; gap: 9px; padding-left: 6px; white-space: nowrap; font-weight: 600; }
.notch { align-self: flex-start; height: 26px; width: 166px; background: #3c3c3c; padding: 7px 4px 0; margin: 0 5px 0 7px; border-radius: 0 0 4px 4px; }
.overview { height: 16px; border: 2px solid #000; background: linear-gradient(#333, #333) 49px 0 / 1px 100% no-repeat, #989898; display: flex; align-items: center; justify-content: space-between; padding: 0 8px 0 17px; }
.overview i { width: 10px; height: 5px; background: #111; }
.overview .hl { box-shadow: 0 -4px 0 #a8d8ec, 0 4px 0 #a8d8ec; }
.chain { width: 196px; height: 18px; background: #464646; border-radius: 3px; display: flex; align-items: center; padding: 0 2px 0 3px; white-space: nowrap; overflow: hidden; margin-right: 7px; justify-content: space-between; }
.chain + .round { margin: 0; }
</style>
